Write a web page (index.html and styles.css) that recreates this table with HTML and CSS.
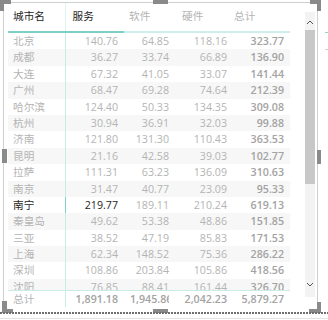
FILE: index.html
```html
<!DOCTYPE html>
<html lang="zh">
<head>
<meta charset="utf-8">
<link rel="stylesheet" href="styles.css">
</head>
<body>
<div class="stage">
  <div class="visual">
    <div class="table">
      <div class="row head">
        <div class="c c1 hd strong">城市名</div>
        <div class="c hd hd2 strong">服务</div>
        <div class="c hd hd3">软件</div>
        <div class="c hd hd4">硬件</div>
        <div class="c hd hd5">总计</div>
      </div>
      <div class="body">
        <div class="row"><div class="c c1">北京</div><div class="c n">140.76</div><div class="c n">64.85</div><div class="c n">118.16</div><div class="c n t">323.77</div></div>
        <div class="row alt"><div class="c c1">成都</div><div class="c n">36.27</div><div class="c n">33.74</div><div class="c n">66.89</div><div class="c n t">136.90</div></div>
        <div class="row"><div class="c c1">大连</div><div class="c n">67.32</div><div class="c n">41.05</div><div class="c n">33.07</div><div class="c n t">141.44</div></div>
        <div class="row alt"><div class="c c1">广州</div><div class="c n">68.47</div><div class="c n">69.28</div><div class="c n">74.64</div><div class="c n t">212.39</div></div>
        <div class="row"><div class="c c1">哈尔滨</div><div class="c n">124.40</div><div class="c n">50.33</div><div class="c n">134.35</div><div class="c n t">309.08</div></div>
        <div class="row alt"><div class="c c1">杭州</div><div class="c n">30.94</div><div class="c n">36.91</div><div class="c n">32.03</div><div class="c n t">99.88</div></div>
        <div class="row"><div class="c c1">济南</div><div class="c n">121.80</div><div class="c n">131.30</div><div class="c n">110.43</div><div class="c n t">363.53</div></div>
        <div class="row alt"><div class="c c1">昆明</div><div class="c n">21.16</div><div class="c n">42.58</div><div class="c n">39.03</div><div class="c n t">102.77</div></div>
        <div class="row"><div class="c c1">拉萨</div><div class="c n">111.31</div><div class="c n">63.23</div><div class="c n">136.09</div><div class="c n t">310.63</div></div>
        <div class="row alt"><div class="c c1">南京</div><div class="c n">31.47</div><div class="c n">40.77</div><div class="c n">23.09</div><div class="c n t">95.33</div></div>
        <div class="row sel"><div class="c c1 strong">南宁</div><div class="c n strong">219.77</div><div class="c n">189.11</div><div class="c n">210.24</div><div class="c n t">619.13</div></div>
        <div class="row alt"><div class="c c1">秦皇岛</div><div class="c n">49.62</div><div class="c n">53.38</div><div class="c n">48.86</div><div class="c n t">151.85</div></div>
        <div class="row"><div class="c c1">三亚</div><div class="c n">38.52</div><div class="c n">47.19</div><div class="c n">85.83</div><div class="c n t">171.53</div></div>
        <div class="row alt"><div class="c c1">上海</div><div class="c n">62.34</div><div class="c n">148.52</div><div class="c n">75.36</div><div class="c n t">286.22</div></div>
        <div class="row"><div class="c c1">深圳</div><div class="c n">108.86</div><div class="c n">203.84</div><div class="c n">105.86</div><div class="c n t">418.56</div></div>
        <div class="row alt"><div class="c c1">沈阳</div><div class="c n">76.85</div><div class="c n">88.41</div><div class="c n">161.44</div><div class="c n t">326.70</div></div>
      </div>
      <div class="row total">
        <div class="c c1">总计</div>
        <div class="c n t"><div class="clip">1,891.18</div></div>
        <div class="c n t"><div class="clip">1,945.86</div></div>
        <div class="c n t"><div class="clip">2,042.23</div></div>
        <div class="c n t"><div class="clip">5,879.27</div></div>
      </div>
    </div>
    <div class="scrollbar">
      <svg class="arrow" width="8" height="6" viewBox="0 0 8 6"><polyline points="1,5 4,2 7,5" fill="none" stroke="#555" stroke-width="1"/></svg>
      <div class="thumb"></div>
      <div class="spacer"></div>
      <svg class="arrow" width="8" height="6" viewBox="0 0 8 6"><polyline points="1,1 4,4 7,1" fill="none" stroke="#555" stroke-width="1"/></svg>
    </div>
    <span class="h h-tl1"></span><span class="h h-tl2"></span>
    <span class="h h-tr1"></span><span class="h h-tr2"></span>
    <span class="h h-bl1"></span><span class="h h-bl2"></span>
    <span class="h h-br1"></span><span class="h h-br2"></span>
    <span class="h h-t"></span><span class="h h-b"></span>
    <span class="h h-l"></span><span class="h h-r"></span>
  </div>
  <div class="dots"></div>
  <div class="edge"></div>
  <span class="mark mark-teal"></span>
  <span class="mark mark-gray"></span>
</div>
</body>
</html>
```
FILE: styles.css
```css
* { box-sizing: border-box; }
html, body { margin: 0; padding: 0; background: #fff; }
body {
  width: 328px; height: 320px; overflow: hidden;
  font-family: "Open Sans", "Noto Sans CJK SC", sans-serif;
  font-size: 10.67px;
  color: #b4b4b4;
}
.stage { position: relative; width: 328px; height: 320px; padding: 2px 0 0 3px; }
.visual {
  position: relative;
  width: 315px; height: 311px;
  border: 1px solid #cfcfcf; border-bottom: none;
  display: flex; gap: 15px;
  padding: 0 2px 0 4px;
}
.table { width: 282px; display: flex; flex-direction: column; }
.row {
  display: grid;
  grid-template-columns: 58px 58px 51px 58px 57px;
  height: 16.4px; line-height: 16.4px;
  white-space: nowrap;
}
.row.alt { background: #f7f7f7; }
.c { padding: 0 6px; overflow: hidden; font-family: "Open Sans", "Noto Sans CJK SC", sans-serif; }
.c1 { padding-left: 5px; border-right: 1px solid #c9ebe6; font-family: "Noto Sans CJK SC", sans-serif; }
.n { text-align: right; }
.t { font-weight: 600; color: #a3a3a3; }
.strong { color: #252423; }
.row.sel .c1 { border-right-color: #7fd0c6; }
.head {
  height: 30px; line-height: 26px;
  border-bottom: 2px solid;
  border-image: linear-gradient(90deg, #7ccfc5 0 116px, #cdeeea 116px) 1;
}
.head .c { font-family: "Noto Sans CJK SC", sans-serif; }
.head .c1 { border-right-color: #dff3f0; }
.head .hd2 { padding-left: 6.5px; }
.head .hd3 { padding-left: 5px; }
.head .hd4 { padding-left: 7px; }
.head .hd5 { padding-left: 1px; }
.body { height: 257px; overflow: hidden; }
.total { border-top: 1px solid #c9ebe6; height: 17.4px; }
.clip { overflow: hidden; text-align: right; }
.scrollbar {
  width: 10px; margin-top: 9px; height: 285px;
  background: #f3f3f3;
  display: flex; flex-direction: column; align-items: center;
}
.arrow { margin-top: 7px; flex: none; }
.scrollbar .thumb { width: 10px; height: 154px; background: #c8c8c8; margin-top: 5px; }
.scrollbar .spacer { flex: 1; }
.scrollbar .arrow:last-child { margin: 0 0 9px; }
.h { position: absolute; background: #8a8a8a; }
.h-tl1 { left: -4px; top: -3px; width: 11px; height: 4px; }
.h-tl2 { left: -4px; top: -3px; width: 4px; height: 11px; }
.h-tr1 { right: -4px; top: -3px; width: 11px; height: 4px; }
.h-tr2 { right: -4px; top: -3px; width: 4px; height: 11px; }
.h-bl1 { left: -2px; bottom: 0; width: 11px; height: 4px; }
.h-bl2 { left: -2px; bottom: 0; width: 5px; height: 12px; }
.h-br1 { right: -4px; bottom: 0; width: 12px; height: 4px; }
.h-br2 { right: -4px; bottom: 0; width: 4px; height: 11px; }
.h-t { left: 149px; top: -3px; width: 15px; height: 4px; }
.h-b { left: 149px; bottom: 0; width: 15px; height: 4px; }
.h-l { left: -2px; top: 146px; width: 5px; height: 14px; }
.h-r { right: -4px; top: 147px; width: 4px; height: 14px; }
.dots {
  position: absolute; left: 0; top: 312px; width: 328px; height: 2px;
  background: repeating-linear-gradient(90deg, #6f6f6f 0 2px, transparent 2px 3px);
}
.edge { position: absolute; left: 0; top: 318px; width: 328px; height: 1px; background: #e3e3e3; }
.mark { position: absolute; left: 325px; width: 3px; height: 1px; }
.mark-teal { top: 32px; background: #8fd6cd; }
.mark-gray { top: 49px; background: #d0d0d0; }
```
